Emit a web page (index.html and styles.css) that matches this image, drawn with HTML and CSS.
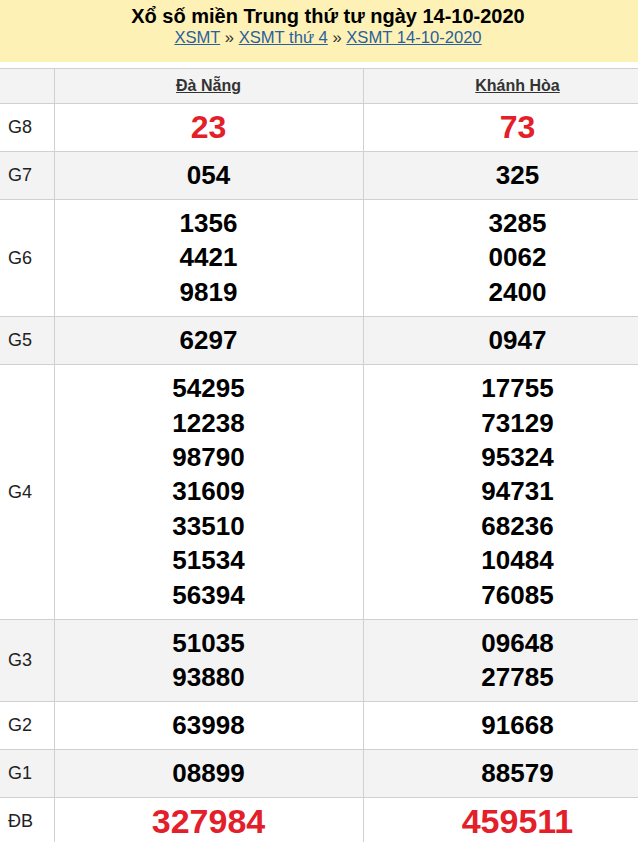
FILE: index.html
```html
<!DOCTYPE html>
<html lang="vi">
<head>
<meta charset="utf-8">
<title>XSMT 14-10-2020</title>
<link rel="stylesheet" href="styles.css">
</head>
<body>
<div class="page">
  <header class="head">
    <h1 class="title">Xổ số miền Trung thứ tư ngày 14-10-2020</h1>
    <div class="crumbs"><a href="#">XSMT</a> » <a href="#">XSMT thứ 4</a> » <a href="#">XSMT 14-10-2020</a></div>
  </header>
  <table class="kq">
    <colgroup><col class="c-lbl"><col class="c-prov"><col class="c-prov"></colgroup>
    <thead>
      <tr><th></th><th><a href="#">Đà Nẵng</a></th><th><a href="#">Khánh Hòa</a></th></tr>
    </thead>
    <tbody>
      <tr class="w"><td class="lbl">G8</td><td class="n red g8">23</td><td class="n red g8">73</td></tr>
      <tr class="g"><td class="lbl">G7</td><td class="n">054</td><td class="n">325</td></tr>
      <tr class="w"><td class="lbl">G6</td><td class="n m"><div>1356</div><div>4421</div><div>9819</div></td><td class="n m"><div>3285</div><div>0062</div><div>2400</div></td></tr>
      <tr class="g"><td class="lbl">G5</td><td class="n">6297</td><td class="n">0947</td></tr>
      <tr class="w"><td class="lbl">G4</td><td class="n m"><div>54295</div><div>12238</div><div>98790</div><div>31609</div><div>33510</div><div>51534</div><div>56394</div></td><td class="n m"><div>17755</div><div>73129</div><div>95324</div><div>94731</div><div>68236</div><div>10484</div><div>76085</div></td></tr>
      <tr class="g"><td class="lbl">G3</td><td class="n"><div>51035</div><div>93880</div></td><td class="n"><div>09648</div><div>27785</div></td></tr>
      <tr class="w"><td class="lbl">G2</td><td class="n">63998</td><td class="n">91668</td></tr>
      <tr class="g"><td class="lbl">G1</td><td class="n">08899</td><td class="n">88579</td></tr>
      <tr class="w"><td class="lbl">ĐB</td><td class="n red db">327984</td><td class="n red db">459511</td></tr>
    </tbody>
  </table>
</div>
</body>
</html>
```

FILE: styles.css
```css
html, body {
  margin: 0;
  padding: 0;
  overflow: hidden;
  background: #fff;
}
body {
  font-family: "Liberation Sans", Arial, sans-serif;
  color: #000;
}
.page {
  width: 672px;
}
.head {
  width: 656px;
  height: 62px;
  background: #fdf1b6;
  text-align: center;
  box-sizing: border-box;
  padding-top: 4px;
}
.title {
  margin: 0;
  font-size: 20px;
  line-height: 24px;
  font-weight: bold;
  color: #000;
}
.crumbs {
  font-size: 16.6px;
  line-height: 20px;
  color: #333;
}
.crumbs a {
  color: #2a5f9e;
  text-decoration: underline;
}
.kq {
  margin-top: 6px;
  width: 672px;
  border-collapse: collapse;
  table-layout: fixed;
}
.c-lbl { width: 54px; }
.c-prov { width: 309px; }
.kq th, .kq td {
  border: 1px solid #d0d0d0;
  text-align: center;
  vertical-align: middle;
}
.kq tr > :first-child { border-left: none; }
.kq thead th {
  background: #f3f3f3;
  height: 34px;
  padding: 0;
  font-size: 16px;
  font-weight: bold;
}
.kq thead th a {
  color: #333;
  text-decoration: underline;
}
.kq tr.g td { background: #f3f3f3; }
.kq tr.w td { background: #fff; }
.lbl {
  text-align: left !important;
  padding: 0 0 0 8px;
  font-size: 18px;
  color: #222;
}
.n {
  padding: 6px 0 7px;
  font-size: 26px;
  line-height: 34px;
  font-weight: bold;
  color: #000;
}
.n.m { line-height: 34.4px; }
.red { color: #e3202a; }
.g8 { font-size: 32px; }
.db { font-size: 34px; }
```
